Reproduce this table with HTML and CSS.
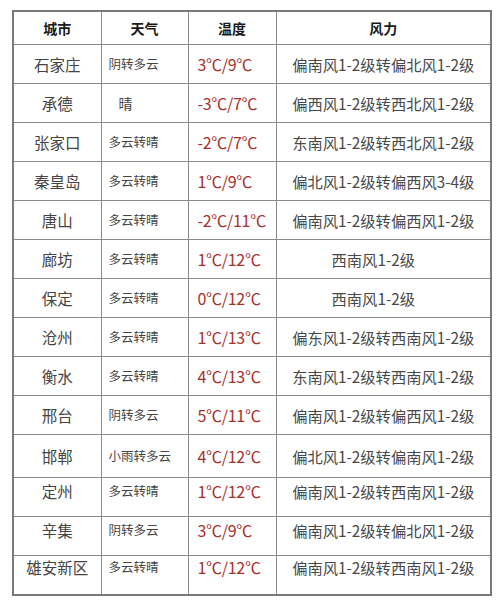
FILE: index.html
```html
<!DOCTYPE html>
<html lang="zh-CN">
<head>
<meta charset="utf-8">
<link rel="stylesheet" href="styles.css">
</head>
<body>
<table class="weather">
  <colgroup>
    <col class="c-city"><col class="c-wx"><col class="c-temp"><col class="c-wind">
  </colgroup>
  <thead>
    <tr><th>城市</th><th>天气</th><th>温度</th><th>风力</th></tr>
  </thead>
  <tbody>
    <tr><td class="city">石家庄</td><td class="wx">阴转多云</td><td class="temp">3℃/9℃</td><td class="wind">偏南风1-2级转偏北风1-2级</td></tr>
    <tr><td class="city">承德</td><td class="wx sunny">晴</td><td class="temp">-3℃/7℃</td><td class="wind">偏西风1-2级转西北风1-2级</td></tr>
    <tr><td class="city">张家口</td><td class="wx">多云转晴</td><td class="temp">-2℃/7℃</td><td class="wind">东南风1-2级转西北风1-2级</td></tr>
    <tr><td class="city">秦皇岛</td><td class="wx">多云转晴</td><td class="temp">1℃/9℃</td><td class="wind">偏北风1-2级转偏西风3-4级</td></tr>
    <tr><td class="city">唐山</td><td class="wx">多云转晴</td><td class="temp">-2℃/11℃</td><td class="wind">偏南风1-2级转偏西风1-2级</td></tr>
    <tr><td class="city">廊坊</td><td class="wx">多云转晴</td><td class="temp">1℃/12℃</td><td class="wind short">西南风1-2级</td></tr>
    <tr><td class="city">保定</td><td class="wx">多云转晴</td><td class="temp">0℃/12℃</td><td class="wind short">西南风1-2级</td></tr>
    <tr><td class="city">沧州</td><td class="wx">多云转晴</td><td class="temp">1℃/13℃</td><td class="wind">偏东风1-2级转西南风1-2级</td></tr>
    <tr><td class="city">衡水</td><td class="wx">多云转晴</td><td class="temp">4℃/13℃</td><td class="wind">东南风1-2级转西南风1-2级</td></tr>
    <tr><td class="city">邢台</td><td class="wx">阴转多云</td><td class="temp">5℃/11℃</td><td class="wind">偏南风1-2级转偏西风1-2级</td></tr>
    <tr class="tall"><td class="city">邯郸</td><td class="wx">小雨转多云</td><td class="temp">4℃/12℃</td><td class="wind">偏北风1-2级转偏南风1-2级</td></tr>
    <tr class="high"><td class="city">定州</td><td class="wx">多云转晴</td><td class="temp">1℃/12℃</td><td class="wind">偏南风1-2级转西南风1-2级</td></tr>
    <tr class="high"><td class="city">辛集</td><td class="wx">阴转多云</td><td class="temp">3℃/9℃</td><td class="wind">偏南风1-2级转偏北风1-2级</td></tr>
    <tr class="higher"><td class="city">雄安新区</td><td class="wx">多云转晴</td><td class="temp">1℃/12℃</td><td class="wind">偏南风1-2级转西南风1-2级</td></tr>
  </tbody>
</table>
</body>
</html>
```

FILE: styles.css
```css
html, body {
  margin: 0;
  padding: 0;
  background: #ffffff;
}
body {
  padding: 10px 0 0 12px;
  font-family: "Noto Sans CJK SC", "Noto Sans", sans-serif;
  color: #3a3a3a;
}
.weather {
  border-collapse: collapse;
  table-layout: fixed;
  width: 478px;
  border: 2px solid #7a7a7a;
}
.c-city { width: 88px; }
.c-wx { width: 87px; }
.c-temp { width: 88px; }
.c-wind { width: 215px; }
.weather th,
.weather td {
  border: 1px solid #8c8c8c;
  padding: 0;
  white-space: nowrap;
  overflow: hidden;
  line-height: 20px;
}
.weather th {
  height: 32px;
  font-size: 14px;
  font-weight: 700;
  color: #1a1a1a;
  text-align: center;
}
.weather td {
  height: 38px;
  vertical-align: middle;
}
.tall td { height: 42px; }
.high td { padding-bottom: 12px; height: 26px; }
.higher td { padding-bottom: 16px; height: 22px; }
.city {
  font-size: 15.5px;
  text-align: center;
  color: #444;
}
.wx {
  font-size: 12.5px;
  text-align: left;
  padding-left: 7px !important;
  color: #444;
}
.sunny {
  padding-left: 17px !important;
  font-size: 14px;
}
.temp {
  font-size: 16px;
  text-align: left;
  padding-left: 9px !important;
  color: #a8302c;
  letter-spacing: -0.3px;
}
.wind {
  font-size: 15.3px;
  text-align: center;
  color: #484848;
}
.short {
  padding-right: 20px !important;
}
```
